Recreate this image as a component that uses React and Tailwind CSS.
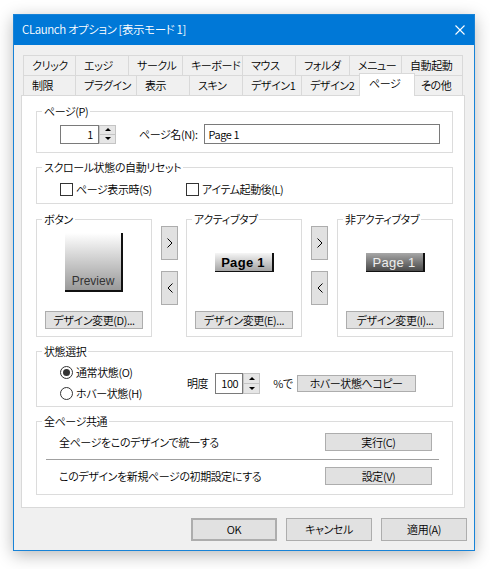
import React from "react";

const row1 = [
  { t: "クリック", w: "w-[52px]" },
  { t: "エッジ", w: "w-[53px]" },
  { t: "サークル", w: "w-[54px]" },
  { t: "キーボード", w: "w-[60px]" },
  { t: "マウス", w: "w-[53px]" },
  { t: "フォルダ", w: "w-[54px]" },
  { t: "メニュー", w: "w-[52px]" },
  { t: "自動起動", w: "w-[62px]", last: true },
];
const row2 = [
  { t: "制限", w: "w-[52px]" },
  { t: "プラグイン", w: "w-[61px]" },
  { t: "表示", w: "w-[53px]" },
  { t: "スキン", w: "w-[53px]" },
  { t: "デザイン1", w: "w-[59px]" },
  { t: "デザイン2", w: "w-[60px]" },
  { t: "ページ", w: "w-[51px]", active: true },
  { t: "その他", w: "w-[51px]", last: true },
];

function Tab({ t, w, last, active }) {
  if (active) {
    return (
      <div className={`relative ${w} h-[20px]`}>
        <div className="absolute left-[-2px] top-[-2px] z-10 w-[56px] h-[23px] bg-white border-t border-x border-[#d9d9d9] pl-[9px] pb-[3px] flex items-center whitespace-nowrap leading-none">
          {t}
        </div>
      </div>
    );
  }
  return (
    <div
      className={`${w} h-[20px] border-t border-l ${last ? "border-r" : ""} border-[#d9d9d9] pl-[8px] flex items-center whitespace-nowrap leading-none`}
    >
      {t}
    </div>
  );
}

function Group({ label, className = "", children }) {
  return (
    <div className={`relative border border-[#dcdcdc] ${className}`}>
      <span className="absolute left-[5px] top-[-9px] bg-white px-[2px] leading-[16px] whitespace-nowrap">
        {label}
      </span>
      {children}
    </div>
  );
}

function Btn({ className = "", children }) {
  return (
    <div
      className={`flex items-center justify-center bg-[#e1e1e1] border border-[#adadad] leading-none whitespace-nowrap ${className}`}
    >
      {children}
    </div>
  );
}

function Arrow({ dir }) {
  return (
    <Btn className="w-[17px] h-[34px]">
      <svg width="6" height="10" viewBox="0 0 6 10">
        <polyline
          points={dir === "r" ? "0.5,0.5 5,5 0.5,9.5" : "5.5,0.5 1,5 5.5,9.5"}
          fill="none"
          stroke="#000"
          strokeWidth="1"
        />
      </svg>
    </Btn>
  );
}

function SpinButtons({ h }) {
  return (
    <div className={`w-[17px] ${h} flex flex-col border border-[#c4c4c4] bg-[#e6e6e6]`}>
      <div className="flex-1 flex items-center justify-center border-b border-[#c4c4c4]">
        <div className="w-0 h-0 border-x-[3px] border-x-transparent border-b-[3px] border-b-black" />
      </div>
      <div className="flex-1 flex items-center justify-center">
        <div className="w-0 h-0 border-x-[3px] border-x-transparent border-t-[3px] border-t-black" />
      </div>
    </div>
  );
}

function Check({ label, className = "" }) {
  return (
    <div className={`flex items-center ${className}`}>
      <div className="w-[13px] h-[13px] border border-[#333] bg-white" />
      <span className="ml-[3px] leading-none whitespace-nowrap">{label}</span>
    </div>
  );
}

function Radio({ label, checked }) {
  return (
    <div className="flex items-center h-[21px]">
      <div className="w-[13px] h-[13px] rounded-full border border-[#333] bg-white flex items-center justify-center">
        {checked && <div className="w-[7px] h-[7px] rounded-full bg-[#333]" />}
      </div>
      <span className="ml-[3px] leading-none whitespace-nowrap">{label}</span>
    </div>
  );
}

function PreviewGroup({ label, children, btn }) {
  return (
    <Group label={label} className="w-[116px] h-[118px]">
      <div className="flex flex-col items-center">
        <div className="h-[85px] w-full flex items-center justify-center">{children}</div>
        <Btn className="mt-[6px] w-[98px] h-[18px]">{btn}</Btn>
      </div>
    </Group>
  );
}

function ArrowCol({ className = "" }) {
  return (
    <div className={`flex flex-col pt-[7px] gap-[11px] ${className}`}>
      <Arrow dir="r" />
      <Arrow dir="l" />
    </div>
  );
}

export default function App() {
  return (
    <div className="w-[490px] h-[569px] bg-white pl-[13px] pt-[14px] font-['Noto_Sans_CJK_JP','Noto_Sans',sans-serif] [font-feature-settings:'palt'] text-[11px] tracking-[-0.4px] font-[350] text-black">
      <div className="w-[462px] h-[537px] flex flex-col border border-[#1883d7] bg-[#f0f0f0] shadow-[0_4px_16px_rgba(0,0,0,0.28)]">
        {/* Title bar */}
        <div className="h-[30px] bg-[#0078d7] flex items-center justify-between pl-[8px] pr-[9px] text-white">
          <span className="leading-none whitespace-nowrap text-[11.5px]">CLaunch オプション [表示モード 1]</span>
          <svg width="10" height="10" viewBox="0 0 10 10">
            <path d="M0.5 0.5 L9.5 9.5 M9.5 0.5 L0.5 9.5" stroke="#fff" strokeWidth="1.1" fill="none" />
          </svg>
        </div>

        {/* Body */}
        <div className="flex flex-col pt-[10px]">
          {/* Tabs */}
          <div className="ml-[9px] flex flex-col">
            <div className="flex">
              {row1.map((t) => (
                <Tab key={t.t} {...t} />
              ))}
            </div>
            <div className="flex">
              {row2.map((t) => (
                <Tab key={t.t} {...t} />
              ))}
            </div>
          </div>

          {/* Panel */}
          <div className="ml-[7px] w-[444px] h-[413px] border border-[#d9d9d9] bg-white pl-[14px] pt-[15px] flex flex-col">
            {/* ページ(P) */}
            <Group label="ページ(P)" className="w-[417px] h-[42px]">
              <div className="flex items-center pt-[12px] pl-[23px]">
                <div className="flex">
                  <div className="w-[39px] h-[19px] border border-[#7a7a7a] bg-white flex items-center justify-end pr-[5px] leading-none">
                    1
                  </div>
                  <SpinButtons h="h-[19px]" />
                </div>
                <span className="ml-[23px] leading-none whitespace-nowrap">ページ名(N):</span>
                <div className="ml-[6px] w-[236px] h-[20px] border border-[#7a7a7a] bg-white flex items-center pl-[4px] leading-none">
                  Page 1
                </div>
              </div>
            </Group>

            {/* スクロール状態の自動リセット */}
            <Group label="スクロール状態の自動リセット" className="mt-[14px] w-[417px] h-[37px]">
              <div className="flex items-center h-[16px] mt-[13px] pl-[23px]">
                <Check label="ページ表示時(S)" className="w-[126px]" />
                <Check label="アイテム起動後(L)" />
              </div>
            </Group>

            {/* Preview groups */}
            <div className="mt-[15px] flex w-[417px]">
              <PreviewGroup label="ボタン" btn="デザイン変更(D)...">
                <div className="w-[58px] h-[59px] bg-gradient-to-b from-[#ffffff] to-[#9a9a9a] border-r-2 border-b-2 border-[#111] flex items-end justify-center pb-[3px]">
                  <span className="font-['Liberation_Sans',sans-serif] text-[12px] tracking-normal leading-none text-[#333]">Preview</span>
                </div>
              </PreviewGroup>
              <ArrowCol className="w-[34px] pl-[9px]" />
              <PreviewGroup label="アクティブタブ" btn="デザイン変更(E)...">
                <div className="w-[59px] h-[19px] bg-gradient-to-b from-[#f6f6f6] to-[#a4a4a4] border-r-2 border-b border-[#111] flex items-center justify-center">
                  <span className="font-['Liberation_Sans',sans-serif] font-bold text-[13px] tracking-[0.3px] leading-none text-black">Page 1</span>
                </div>
              </PreviewGroup>
              <ArrowCol className="w-[35px] pl-[9px]" />
              <PreviewGroup label="非アクティブタブ" btn="デザイン変更(I)...">
                <div className="w-[59px] h-[19px] bg-gradient-to-b from-[#a8a8a8] to-[#4a4a4a] border-r-2 border-b border-[#111] flex items-center justify-center">
                  <span className="font-['Liberation_Sans',sans-serif] text-[13px] tracking-[0.3px] leading-none text-[#eeeeee]">Page 1</span>
                </div>
              </PreviewGroup>
            </div>

            {/* 状態選択 */}
            <Group label="状態選択" className="mt-[14px] w-[417px] h-[56px]">
              <div className="flex items-center pt-[10px] pl-[23px]">
                <div className="w-[127px] flex flex-col">
                  <Radio label="通常状態(O)" checked />
                  <Radio label="ホバー状態(H)" />
                </div>
                <span className="leading-none whitespace-nowrap">明度</span>
                <div className="ml-[7px] flex">
                  <div className="w-[28px] h-[21px] border border-[#7a7a7a] bg-white flex items-center justify-end pr-[4px] leading-none">
                    100
                  </div>
                  <SpinButtons h="h-[21px]" />
                </div>
                <span className="ml-[13px] leading-none whitespace-nowrap">%で</span>
                <Btn className="ml-[4px] w-[119px] h-[17px]">ホバー状態へコピー</Btn>
              </div>
            </Group>

            {/* 全ページ共通 */}
            <Group label="全ページ共通" className="mt-[14px] w-[417px] h-[74px]">
              <div className="flex flex-col pt-[11px]">
                <div className="flex items-center h-[18px] pl-[22px] pr-[20px]">
                  <span className="flex-1 leading-none whitespace-nowrap">全ページをこのデザインで統一する</span>
                  <Btn className="w-[107px] h-[18px]">実行(C)</Btn>
                </div>
                <div className="mt-[8px] ml-[9px] w-[393px] h-px bg-[#a0a0a0]" />
                <div className="mt-[7px] flex items-center h-[18px] pl-[22px] pr-[20px]">
                  <span className="flex-1 leading-none whitespace-nowrap">このデザインを新規ページの初期設定にする</span>
                  <Btn className="w-[107px] h-[18px]">設定(V)</Btn>
                </div>
              </div>
            </Group>
          </div>

          {/* Dialog buttons */}
          <div className="mt-[10px] flex justify-end gap-[9px] pr-[7px]">
            <Btn className="w-[86px] h-[23px] border-2 border-[#0078d7]">OK</Btn>
            <Btn className="w-[86px] h-[23px]">キャンセル</Btn>
            <Btn className="w-[86px] h-[23px]">適用(A)</Btn>
          </div>
        </div>
      </div>
    </div>
  );
}
